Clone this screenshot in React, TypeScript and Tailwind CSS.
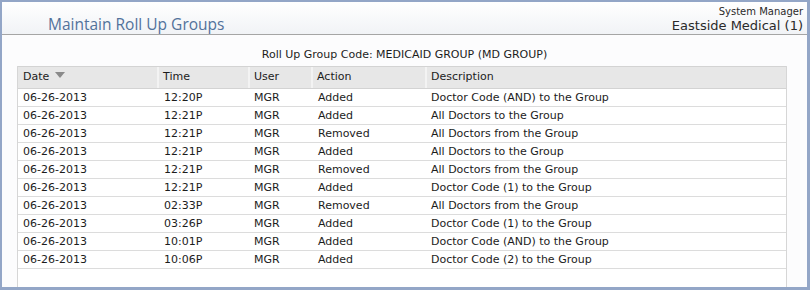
import React from 'react';

const rows = [
  ['06-26-2013', '12:20P', 'MGR', 'Added', 'Doctor Code (AND) to the Group'],
  ['06-26-2013', '12:21P', 'MGR', 'Added', 'All Doctors to the Group'],
  ['06-26-2013', '12:21P', 'MGR', 'Removed', 'All Doctors from the Group'],
  ['06-26-2013', '12:21P', 'MGR', 'Added', 'All Doctors to the Group'],
  ['06-26-2013', '12:21P', 'MGR', 'Removed', 'All Doctors from the Group'],
  ['06-26-2013', '12:21P', 'MGR', 'Added', 'Doctor Code (1) to the Group'],
  ['06-26-2013', '02:33P', 'MGR', 'Removed', 'All Doctors from the Group'],
  ['06-26-2013', '03:26P', 'MGR', 'Added', 'Doctor Code (1) to the Group'],
  ['06-26-2013', '10:01P', 'MGR', 'Added', 'Doctor Code (AND) to the Group'],
  ['06-26-2013', '10:06P', 'MGR', 'Added', 'Doctor Code (2) to the Group'],
];

const cols = 'grid grid-cols-[141px_91px_63px_114px_1fr]';

const App = () => {
  return (
    <div className="w-[810px] h-[290px] flex flex-col border-l-2 border-t-2 border-r-[3px] border-b-[3px] border-[#93a6c7] bg-[#fcfcfd] font-['DejaVu_Sans',sans-serif] text-[#1c1c1c] overflow-hidden">
      {/* header */}
      <div className="h-[33px] shrink-0 flex justify-between border-b border-[#a5a5a5] bg-gradient-to-b from-white to-[#f1f3f6]">
        <h1 className="pl-[46px] pt-[12px] text-[15.5px] leading-[20px] font-medium text-[#52729b] font-['Open_Sans',sans-serif]">
          Maintain Roll Up Groups
        </h1>
        <div className="pr-[4px] pt-[4px] text-right text-[#2a2a2a]">
          <div className="text-[10px] leading-[12px]">System Manager</div>
          <div className="text-[13px] leading-[16px]">Eastside Medical (1)</div>
        </div>
      </div>

      {/* body */}
      <div className="flex-1 flex flex-col">
        <div className="h-[31px] shrink-0 pt-[13px] text-center text-[11px] leading-[14px]">
          Roll Up Group Code: MEDICAID GROUP (MD GROUP)
        </div>
        <div className="ml-[15px] w-[770px] flex-1 border-x border-[#d6d6d6] bg-white text-[11px]">
          <div className={`${cols} h-[23px] border-y border-[#d3d3d3] bg-[#e7e7e7] leading-[19px]`}>
            <div className="pl-[5px] flex items-start gap-[6px] border-r-2 border-[#f3f3f3]">
              Date
              <svg width="10" height="6" viewBox="0 0 10 6" className="mt-[5px]">
                <path d="M0 0 H10 L5 6 Z" fill="#8a8a8a" />
              </svg>
            </div>
            <div className="pl-[4px] border-r-2 border-[#f3f3f3]">Time</div>
            <div className="pl-[4px] border-r-2 border-[#f3f3f3]">User</div>
            <div className="pl-[4px] border-r-2 border-[#f3f3f3]">Action</div>
            <div className="pl-[4px]">Description</div>
          </div>
          {rows.map((r, i) => (
            <div key={i} className={`${cols} h-[18px] border-b border-[#dcdcdc] leading-[17px]`}>
              <div className="pl-[5px]">{r[0]}</div>
              <div className="pl-[5px]">{r[1]}</div>
              <div className="pl-[4px]">{r[2]}</div>
              <div className="pl-[5px]">{r[3]}</div>
              <div className="pl-[4px]">{r[4]}</div>
            </div>
          ))}
        </div>
      </div>
    </div>
  );
};

export default App;
